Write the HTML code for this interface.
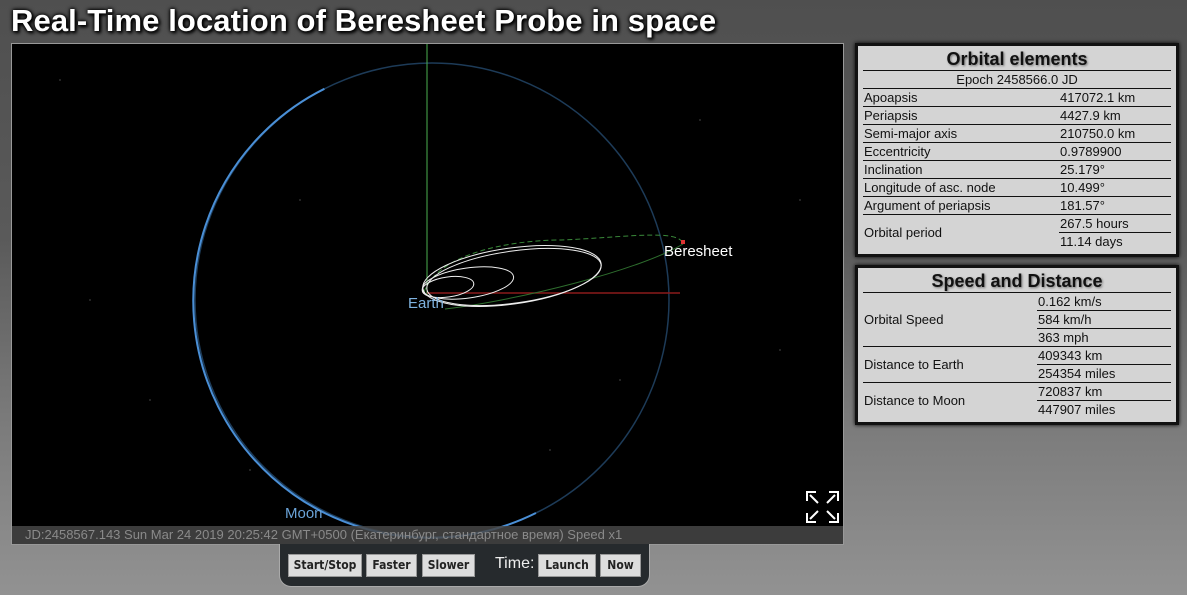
<!DOCTYPE html>
<html><head><meta charset="utf-8"><style>
*{margin:0;padding:0;box-sizing:border-box}
body{width:1187px;height:595px;overflow:hidden;font-family:"Liberation Sans",sans-serif;background:linear-gradient(180deg,#4f4f4f 0%,#5a5a5a 40%,#7a7a7a 70%,#929292 100%);position:relative}
h1{position:absolute;left:11px;top:3px;font-size:31px;font-weight:bold;color:#fff;text-shadow:2px 2px 3px #000,0 0 5px #000,0 0 3px #000;letter-spacing:0.1px}
#cv{position:absolute;left:11px;top:43px;width:833px;height:502px;background:#000;border:1px solid #999;overflow:hidden}
#st{position:absolute;left:0;bottom:0;width:100%;height:18px;background:rgba(70,70,70,.85);color:#8a8a8a;font-size:13px;line-height:18px;padding-left:13px}
.pn{position:absolute;left:855px;width:324px;background:#d4d4d4;border:3px solid #111;box-shadow:0 0 4px #000;padding:2px 5px 0 5px;font-size:13px;color:#111}
.pn h2{font-size:18px;text-align:center;border-bottom:1px solid #111;line-height:22px;text-shadow:1px 1px 2px #777}
table{width:100%;border-collapse:collapse}
td{line-height:17px;padding:0 1px;border-bottom:1px solid #111}
tr:last-child td{border-bottom:none}
#ctl{position:absolute;left:279px;top:544px;width:371px;height:43px;background:#262a2d;border:1px solid #aaa;border-top:none;border-radius:0 0 12px 12px}
.b{position:absolute;top:10px;height:23px;background:#ddd;border:1px solid #999;font-weight:bold;color:#222;line-height:21px;text-align:center;font-family:"DejaVu Sans Condensed","DejaVu Sans",sans-serif;font-size:12px}
</style></head><body>
<h1>Real-Time location of Beresheet Probe in space</h1>
<div id="cv">
<svg width="833" height="502" viewBox="12 44 833 502" style="position:absolute;left:0;top:0">
<g fill="#777">
<circle cx="60" cy="80" r=".6"/><circle cx="150" cy="400" r=".6"/><circle cx="700" cy="120" r=".6"/><circle cx="780" cy="350" r=".6"/><circle cx="300" cy="200" r=".6"/><circle cx="550" cy="450" r=".6"/><circle cx="90" cy="300" r=".6"/><circle cx="620" cy="380" r=".6"/><circle cx="250" cy="470" r=".6"/><circle cx="800" cy="200" r=".6"/>
</g>
<circle cx="432" cy="300" r="237" fill="none" stroke="#1d3b58" stroke-width="1.5"/>
<path d="M324.4 88.8 A237 237 0 0 0 535.9 513" fill="none" stroke="#4a8fd6" stroke-width="2"/>
<line x1="427" y1="44" x2="427" y2="295" stroke="#4caf50" stroke-width="1"/>
<line x1="427" y1="293" x2="680" y2="293" stroke="#8b1a1a" stroke-width="1.5"/>
<path d="M424 292 C440 250 520 240 560 240 C620 238 680 228 683 244" fill="none" stroke="#3a8a3a" stroke-width="1" stroke-dasharray="5 3"/>
<path d="M683 244 C640 270 520 300 445 309" fill="none" stroke="#2e6e2e" stroke-width="1"/>
<g fill="none" stroke="#eee" stroke-width="1">
<ellipse cx="512" cy="276" rx="90" ry="28" transform="rotate(-8 512 276)"/>
<ellipse cx="514" cy="277" rx="88" ry="26" transform="rotate(-8 514 277)"/>
<ellipse cx="468" cy="283" rx="46" ry="15" transform="rotate(-8 468 283)"/>
<ellipse cx="448" cy="287" rx="26" ry="10" transform="rotate(-8 448 287)"/>
</g>
<rect x="681" y="240" width="4" height="4" fill="#d33"/>
<text x="408" y="308" fill="#7fb3e0" font-size="15" font-family="Liberation Sans">Earth</text>
<text x="664" y="256" fill="#fff" font-size="15" font-family="Liberation Sans">Beresheet</text>
<text x="285" y="518" fill="#6aa3d8" font-size="15" font-family="Liberation Sans">Moon</text>
<g stroke="#fff" stroke-width="2" fill="none">
<path d="M807 501V492H816M829 492H838V501M807 513V522H816M829 522H838V513"/>
<path d="M810 495L818 503M835 495L827 503M810 519L818 511M835 519L827 511"/>
</g>
</svg>
<div id="st">JD:2458567.143 Sun Mar 24 2019 20:25:42 GMT+0500 (Екатеринбург, стандартное время) Speed x1</div>
</div>
<div class="pn" style="top:43px;height:214px">
<h2>Orbital elements</h2>
<table>
<tr><td colspan="2" style="text-align:center">Epoch 2458566.0 JD</td></tr>
<tr><td style="width:196px">Apoapsis</td><td>417072.1 km</td></tr>
<tr><td>Periapsis</td><td>4427.9 km</td></tr>
<tr><td>Semi-major axis</td><td>210750.0 km</td></tr>
<tr><td>Eccentricity</td><td>0.9789900</td></tr>
<tr><td>Inclination</td><td>25.179°</td></tr>
<tr><td>Longitude of asc. node</td><td>10.499°</td></tr>
<tr><td>Argument of periapsis</td><td>181.57°</td></tr>
<tr><td rowspan="2" style="border-bottom:none">Orbital period</td><td>267.5 hours</td></tr>
<tr><td>11.14 days</td></tr>
</table></div>
<div class="pn" style="top:265px;height:160px">
<h2>Speed and Distance</h2>
<table>
<tr><td rowspan="3" style="width:174px">Orbital Speed</td><td>0.162 km/s</td></tr>
<tr><td>584 km/h</td></tr>
<tr><td>363 mph</td></tr>
<tr><td rowspan="2">Distance to Earth</td><td>409343 km</td></tr>
<tr><td>254354 miles</td></tr>
<tr><td rowspan="2" style="border-bottom:none">Distance to Moon</td><td>720837 km</td></tr>
<tr><td>447907 miles</td></tr>
</table></div>
<div id="ctl">
<div class="b" style="left:8px;width:74px">Start/Stop</div>
<div class="b" style="left:86px;width:51px">Faster</div>
<div class="b" style="left:142px;width:53px">Slower</div>
<div style="position:absolute;left:215px;top:11px;color:#eee;font-size:16px">Time:</div>
<div class="b" style="left:258px;width:58px">Launch</div>
<div class="b" style="left:320px;width:41px">Now</div>
</div>
</body></html>
